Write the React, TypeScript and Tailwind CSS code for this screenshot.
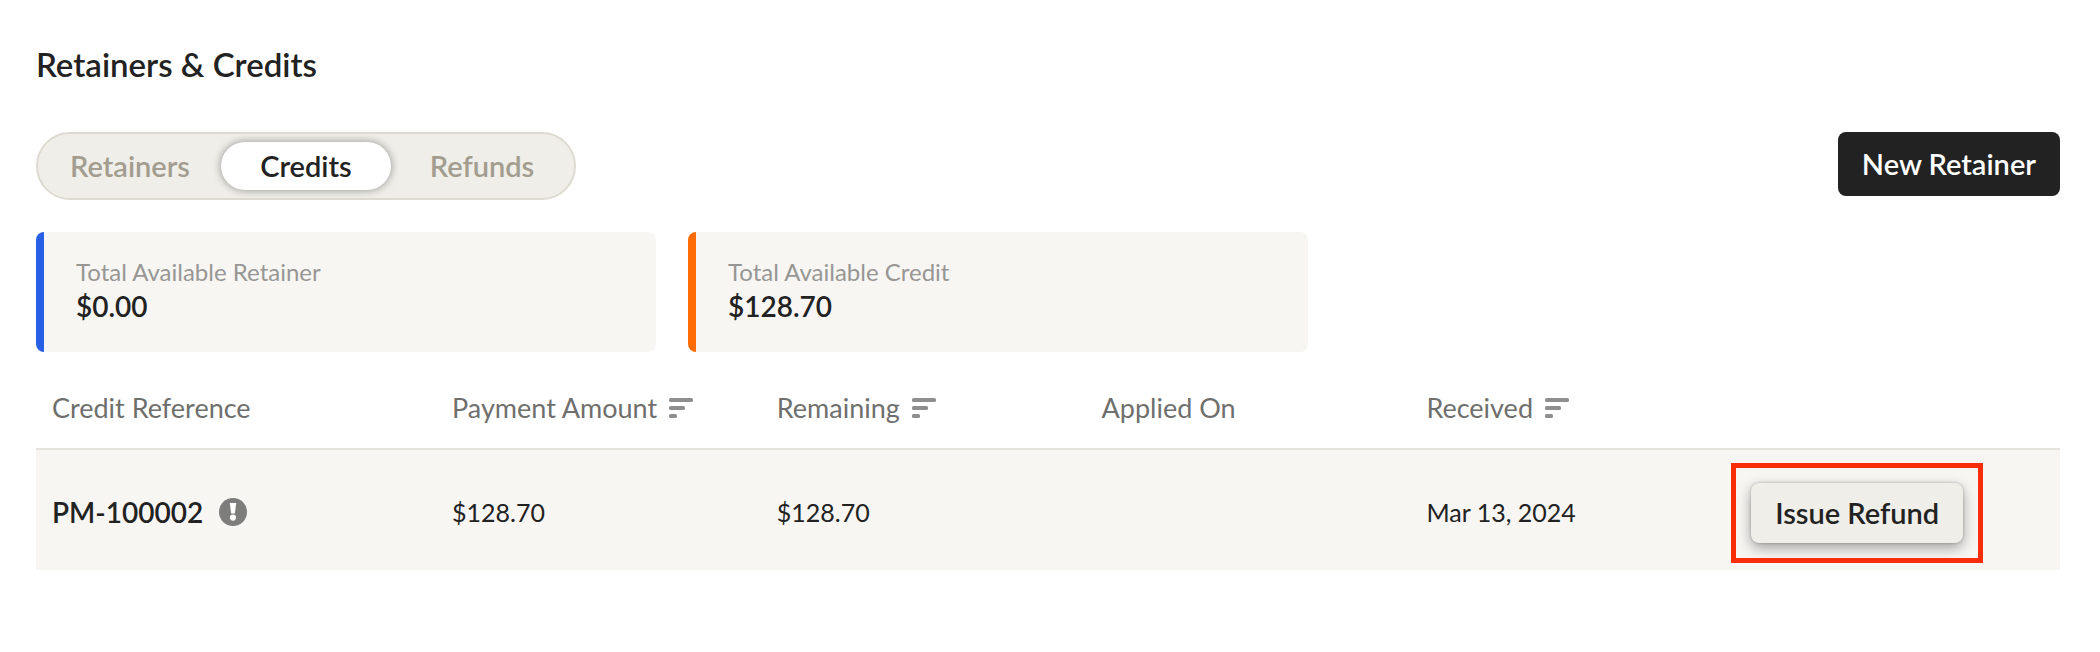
import { useState } from 'react'
import clsx from 'clsx'

const tabs = ['Retainers', 'Credits', 'Refunds']

const columns = [
  { label: 'Credit Reference', sortable: false },
  { label: 'Payment Amount', sortable: true },
  { label: 'Remaining', sortable: true },
  { label: 'Applied On', sortable: false },
  { label: 'Received', sortable: true },
]

const credits = [
  {
    reference: 'PM-100002',
    amount: '$128.70',
    remaining: '$128.70',
    appliedOn: '',
    received: 'Mar 13, 2024',
  },
]

const SortIcon = () => (
  <svg width="24" height="20" viewBox="0 0 24 20" fill="#8f8f8f">
    <rect width="24" height="4" rx="1.5" />
    <rect y="8" width="16" height="4" rx="1.5" />
    <rect y="16" width="8" height="4" rx="1.5" />
  </svg>
)

const InfoIcon = () => (
  <svg width="28" height="28" viewBox="0 0 28 28">
    <circle cx="14" cy="14" r="14" fill="#7d7d7c" />
    <path d="M10.8 5h6.4l-1.3 10.6h-3.8z" fill="#fff" />
    <circle cx="14" cy="19.6" r="3.1" fill="#fff" />
  </svg>
)

type SummaryCardProps = {
  label: string
  value: string
  className: string
}

const SummaryCard = ({ label, value, className }: SummaryCardProps) => (
  <div
    className={clsx(
      'w-full max-w-[620px] rounded-lg border-l-8 bg-[#f7f6f3] px-8 pt-6 pb-7',
      className
    )}
  >
    <p className="text-2xl leading-8 text-[#979694]">{label}</p>
    <p className="text-[28px] leading-9 font-semibold">{value}</p>
  </div>
)

export default function App() {
  const [activeTab, setActiveTab] = useState('Credits')

  return (
    <main className="bg-white pt-11 pr-10 pb-20 pl-9 font-['Lato',sans-serif] text-[#222222]">
      <h1 className="mb-12 text-[33px] leading-10 font-semibold">
        Retainers &amp; Credits
      </h1>

      <div className="mb-8 flex items-start justify-between">
        <div
          role="tablist"
          className="flex gap-1.5 rounded-full border-2 border-[#dddad1] bg-[#efeee9] px-[7px] py-2"
        >
          {tabs.map((tab) => (
            <button
              key={tab}
              type="button"
              role="tab"
              aria-selected={tab === activeTab}
              onClick={() => setActiveTab(tab)}
              className={clsx(
                'h-12 w-[170px] rounded-full text-[29px] font-semibold',
                tab === activeTab
                  ? 'bg-white shadow-[0_0_8px_rgba(0,0,0,0.4)]'
                  : 'text-[#a39d8f]'
              )}
            >
              {tab}
            </button>
          ))}
        </div>
        <button
          type="button"
          className="h-16 rounded-lg bg-[#222222] px-6 text-[29px] font-semibold text-white"
        >
          New Retainer
        </button>
      </div>

      <div className="mb-4 flex gap-8">
        <SummaryCard
          label="Total Available Retainer"
          value="$0.00"
          className="border-[#275fe6]"
        />
        <SummaryCard
          label="Total Available Credit"
          value="$128.70"
          className="border-[#ff6b05]"
        />
      </div>

      <table className="w-full table-fixed text-left">
        <thead>
          <tr className="h-[81px] border-b-2 border-[#e5e4dc] text-[27px] text-[#6f6f6d]">
            {columns.map(({ label, sortable }) => (
              <th
                key={label}
                className="px-4 font-normal whitespace-nowrap first:w-[400px]"
              >
                {sortable ? (
                  <button type="button" className="flex items-center gap-3">
                    {label}
                    <SortIcon />
                  </button>
                ) : (
                  label
                )}
              </th>
            ))}
            <th aria-label="Actions" />
          </tr>
        </thead>
        <tbody>
          {credits.map((credit) => (
            <tr
              key={credit.reference}
              className="h-[121px] bg-[#f7f6f3] text-[25px] whitespace-nowrap"
            >
              <td className="px-4 pt-1">
                <div className="flex items-center gap-4 text-[28px] font-semibold">
                  {credit.reference}
                  <InfoIcon />
                </div>
              </td>
              <td className="px-4 pt-1.5">{credit.amount}</td>
              <td className="px-4 pt-1.5">{credit.remaining}</td>
              <td className="px-4 pt-1.5">{credit.appliedOn}</td>
              <td className="px-4 pt-1.5">{credit.received}</td>
              <td className="px-4 pt-1.5">
                <div className="relative w-fit">
                  <button
                    type="button"
                    className="block h-15 rounded-lg bg-[#efeee9] px-6 text-[29px] font-semibold shadow-[0_0_3px_rgba(0,0,0,0.25),0_5px_14px_rgba(0,0,0,0.35)]"
                  >
                    Issue Refund
                  </button>
                  <div className="pointer-events-none absolute -inset-5 border-[5px] border-[#f92d0a]" />
                </div>
              </td>
            </tr>
          ))}
        </tbody>
      </table>
    </main>
  )
}
